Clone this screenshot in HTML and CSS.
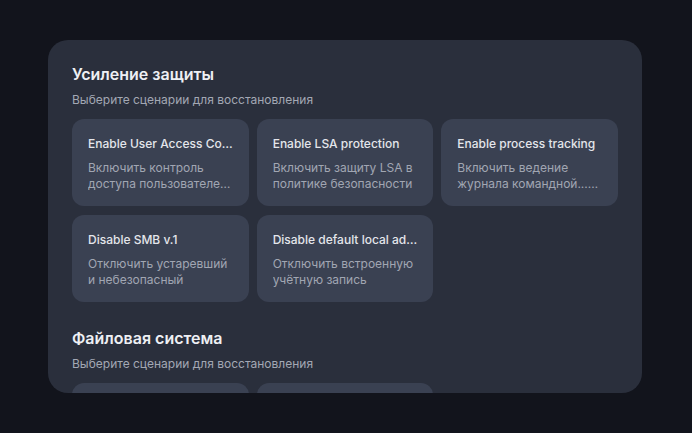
FILE: index.html
```html
<!DOCTYPE html>
<html>
  <head>
    <meta charset="utf-8">
    <title>Сценарии восстановления</title>
    <link rel="stylesheet" href="styles.css">
  </head>
  <body>
    <section class="panel">

      <div class="group">
        <h2>Усиление защиты</h2>
        <p class="hint">Выберите сценарии для восстановления</p>
        <div class="cards">
          <div class="card">
            <p class="title">Enable User Access Control</p>
            <p class="desc">Включить контроль доступа пользователей (UAC)</p>
          </div>
          <div class="card">
            <p class="title">Enable LSA protection</p>
            <p class="desc">Включить защиту LSA в политике безопасности</p>
          </div>
          <div class="card">
            <p class="title">Enable process tracking</p>
            <p class="desc">Включить ведение журнала командной... строки</p>
          </div>
          <div class="card">
            <p class="title">Disable SMB v.1</p>
            <p class="desc">Отключить устаревший и небезопасный</p>
          </div>
          <div class="card">
            <p class="title">Disable default local administrator</p>
            <p class="desc">Отключить встроенную учётную запись</p>
          </div>
        </div>
      </div>

      <div class="group">
        <h2>Файловая система</h2>
        <p class="hint">Выберите сценарии для восстановления</p>
        <div class="cards">
          <div class="card">
            <p class="title">Restore file permissions</p>
            <p class="desc">Восстановить права доступа к файлам</p>
          </div>
          <div class="card">
            <p class="title">Clean temporary files</p>
            <p class="desc">Удалить временные файлы системы</p>
          </div>
        </div>
      </div>

    </section>
  </body>
</html>
```

FILE: styles.css
```css
/* General styles */

html {
  height: 100%;
  font-family: Inter, "Noto Sans", sans-serif;
}

body {
  margin: 0;
  height: inherit;
  background-color: #12141c;
  padding: 40px 50px 40px 48px;
  box-sizing: border-box;
}

* {
  box-sizing: border-box;
}

p, h2 {
  margin: 0;
}

/* Panel */

.panel {
  height: 353px;
  background-color: #2a2f3c;
  border-radius: 20px;
  padding: 24px 24px 0;
  overflow: hidden;
}

.group + .group {
  margin-top: 26px;
}

.group h2 {
  font-size: 16px;
  line-height: 20px;
  font-weight: 600;
  color: #eef0f4;
}

.hint {
  margin-top: 8px;
  font-size: 12px;
  line-height: 16px;
  color: #a3a8b4;
}

/* Cards */

.cards {
  margin-top: 11px;
  display: grid;
  grid-template-columns: repeat(3, 1fr);
  gap: 9px 8px;
}

.card {
  background-color: #3a4152;
  border-radius: 12px;
  padding: 17px 16px 14px;
  min-width: 0;
}

.card .title {
  font-size: 12px;
  line-height: 16px;
  font-weight: 500;
  color: #e4e6eb;
  white-space: nowrap;
  overflow: hidden;
  text-overflow: ellipsis;
}

.card .desc {
  margin-top: 8px;
  font-size: 12px;
  line-height: 16px;
  color: #a1a6b2;
  height: 32px;
  display: -webkit-box;
  -webkit-line-clamp: 2;
  -webkit-box-orient: vertical;
  overflow: hidden;
}
```
